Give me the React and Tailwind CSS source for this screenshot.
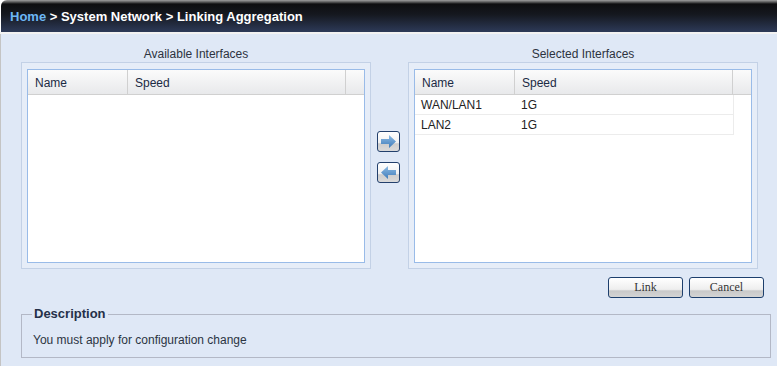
import React from 'react';

const availableRows = [];
const selectedRows = [
  { name: 'WAN/LAN1', speed: '1G' },
  { name: 'LAN2', speed: '1G' },
];

const ArrowIcon = ({ dir }) => (
  <svg width="21" height="19" viewBox="0 0 21 19">
    <defs>
      <linearGradient id={`ag-${dir}`} x1="0" y1="0" x2="0" y2="1">
        <stop offset="0" stopColor="#8dbbe4" />
        <stop offset="1" stopColor="#3f7cba" />
      </linearGradient>
    </defs>
    {dir === 'right' ? (
      <path d="M3 7h8V3L18 9.5 11 16v-4H3z" fill={`url(#ag-${dir})`} />
    ) : (
      <path d="M18 7h-8V3L3 9.5 10 16v-4h8z" fill={`url(#ag-${dir})`} />
    )}
  </svg>
);

const ArrowButton = ({ dir }) => (
  <button className="w-[23px] h-[21px] flex items-center justify-center rounded-[3px] border border-[#23406c] bg-[linear-gradient(to_bottom,#ffffff_0%,#f2f2f2_55%,#cdcdcd_62%,#dadada_100%)]">
    <ArrowIcon dir={dir} />
  </button>
);

const Grid = ({ title, rows }) => (
  <div className="w-[350px] flex flex-col">
    <div className="h-[15px] leading-[15px] text-center text-[12px] text-[#2d3340]">{title}</div>
    <div className="h-[207px] border border-[#c3d1e6] bg-[#e6edf8] px-[5px] pt-[6px] pb-[5px]">
      <div className="h-full border border-[#99bbe8] bg-white flex flex-col">
        <div className="flex h-[25px] border-b border-[#d0d0d0] bg-[linear-gradient(to_bottom,#fbfbfb,#e8e9eb)] text-[12px] text-[#1b2a44]">
          <div className="w-[100px] border-r border-[#d0d0d0] pl-[7px] pt-[1px] leading-[24px]">Name</div>
          <div className="flex-1 border-r border-[#d0d0d0] pl-[7px] pt-[1px] leading-[24px]">Speed</div>
          <div className="w-[18px]"></div>
        </div>
        <div className="pr-[17px]">
          {rows.map((r) => (
            <div key={r.name} className="flex h-[20px] border-b border-r border-[#ececec] text-[12px] text-[#222] leading-[20px]">
              <div className="w-[100px] pl-[6px]">{r.name}</div>
              <div className="flex-1 pl-[6px]">{r.speed}</div>
            </div>
          ))}
        </div>
      </div>
    </div>
  </div>
);

const FormButton = ({ children }) => (
  <button className="w-[75px] h-[21px] rounded-[3px] border border-[#1d3f6d] bg-[linear-gradient(to_bottom,#ffffff_0%,#eeeeee_60%,#c9c9c9_68%,#d4d4d4_100%)] font-['Liberation_Serif'] text-[12px] text-[#333] leading-[19px]">
    {children}
  </button>
);

export default function App() {
  return (
    <div className="w-[777px] h-[366px] overflow-hidden bg-white font-['Liberation_Sans',sans-serif]">
      <div className="h-[32px] ml-[1px] rounded-tl-[6px] bg-[linear-gradient(to_bottom,#a0a0a0_0px,#5c5c5c_2px,#0e0e10_4px,#15181f_45%,#2d3a58_100%)] flex items-center pl-[9px] pt-[1px]">
        <span className="text-[13px] font-bold text-[#6cb6f4]">Home</span>
        <span className="text-[13px] font-bold text-white whitespace-pre"> &gt; System Network &gt; Linking Aggregation</span>
      </div>
      <div className="h-[2px] bg-[#f2f2f2]"></div>
      <div className="h-[332px] bg-[#dfe8f6] border-l border-[#c4c4c4] pl-[20px] pt-[13px]">
        <div className="flex">
          <Grid title="Available Interfaces" rows={availableRows} />
          <div className="w-[37px] flex flex-col items-start pt-[84px] pl-[6px] gap-[10px]">
            <ArrowButton dir="right" />
            <ArrowButton dir="left" />
          </div>
          <Grid title="Selected Interfaces" rows={selectedRows} />
        </div>
        <div className="flex justify-end gap-[6px] mt-[8px] pr-[13px]">
          <FormButton>Link</FormButton>
          <FormButton>Cancel</FormButton>
        </div>
        <fieldset className="mt-[8px] w-[750px] h-[52px] border border-[#b3b8c6] pl-[10px] pr-[10px]">
          <legend className="px-[2px] text-[13px] font-bold text-[#253048] leading-[16px]">Description</legend>
          <div className="pt-[11px] pl-[1px] text-[12px] text-[#2b3442] leading-[15px]">You must apply for configuration change</div>
        </fieldset>
      </div>
    </div>
  );
}
